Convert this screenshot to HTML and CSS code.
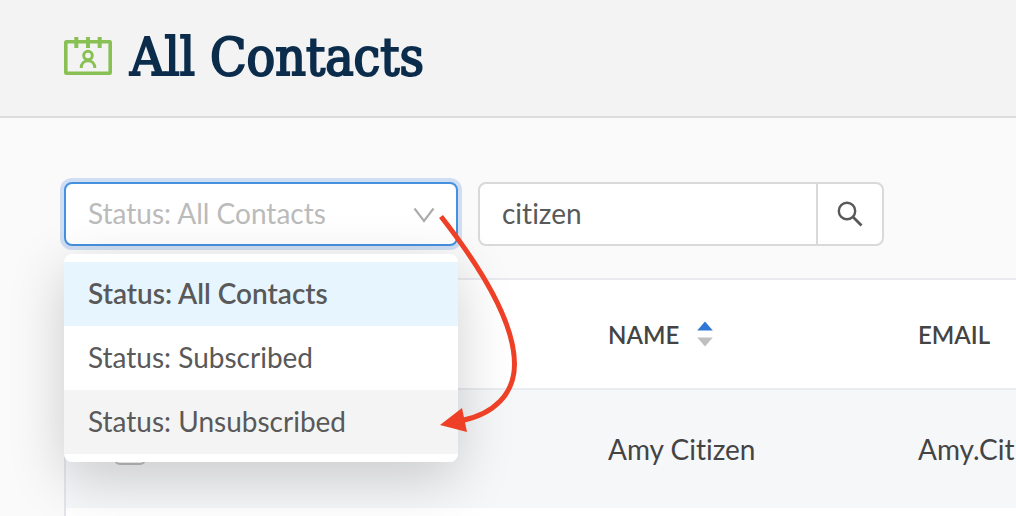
FILE: index.html
```html
<!DOCTYPE html>
<html lang="en">
<head>
    <meta charset="UTF-8">
    <meta name="viewport" content="width=device-width, initial-scale=1.0">
    <title>All Contacts</title>
    <link rel="stylesheet" href="styles.css">
</head>
<body>
    <header class="page-header">
        <svg class="page-icon" width="48" height="40" viewBox="0 0 48 40" fill="none" stroke="#89c053" aria-hidden="true">
            <rect x="1.800" y="5.800" width="44.400" height="31.400" rx="0.5" stroke-width="3.600"/>
            <path d="M12.3 1v11M24 1v11M35.7 1v11" stroke-width="4"/>
            <circle cx="24" cy="19.500" r="4.3" stroke-width="3"/>
            <path d="M17.2 32c0-4.200 2.800-7.200 6.800-7.200s6.800 3 6.800 7.200" stroke-width="3"/>
        </svg>
        <h1>All Contacts</h1>
    </header>

    <main class="content">
        <form class="filters">
            <div class="status-filter">
                <select class="status-select" id="status" aria-label="Status">
                    <option selected>Status: All Contacts</option>
                    <option>Status: Subscribed</option>
                    <option>Status: Unsubscribed</option>
                </select>
                <svg class="chevron" width="22" height="16" viewBox="0 0 22 16" fill="none" stroke="#adadad" stroke-width="2.200" aria-hidden="true">
                    <path d="M1.500 1.500L11 14L20.500 1.500"/>
                </svg>
                <ul class="menu" role="listbox" aria-label="Status options">
                    <li class="menu-item selected" role="option" aria-selected="true">Status: All Contacts</li>
                    <li class="menu-item" role="option">Status: Subscribed</li>
                    <li class="menu-item active" role="option">Status: Unsubscribed</li>
                </ul>
            </div>

            <div class="search">
                <input class="search-input" type="text" value="citizen" aria-label="Search contacts">
                <button class="search-button" type="button" aria-label="Search">
                    <svg width="28" height="28" viewBox="0 0 28 28" fill="none" stroke="#595959" stroke-width="2.400" aria-hidden="true">
                        <circle cx="11" cy="11" r="8.200"/>
                        <path d="M16.800 16.800L25.500 25.500" stroke-width="2.800"/>
                    </svg>
                </button>
            </div>
        </form>

        <table class="contacts">
            <thead>
                <tr>
                    <th class="col-select"></th>
                    <th class="col-name">
                        <span class="sortable">NAME
                            <svg width="16" height="26" viewBox="0 0 16 26" aria-hidden="true">
                                <path d="M8 0.500L15.800 9.500H0.200z" fill="#2f77d6"/>
                                <path d="M8 25.500L15.800 16.500H0.200z" fill="#bfbfbf"/>
                            </svg>
                        </span>
                    </th>
                    <th>EMAIL</th>
                </tr>
            </thead>
            <tbody>
                <tr>
                    <td><input class="row-check" type="checkbox" aria-label="Select Amy Citizen"></td>
                    <td>Amy Citizen</td>
                    <td>Amy.Citizen</td>
                </tr>
                <tr>
                    <td></td>
                    <td></td>
                    <td></td>
                </tr>
            </tbody>
        </table>
    </main>

    <svg class="arrow" width="90" height="230" viewBox="434 210 90 230" aria-hidden="true">
        <path d="M441 216.500C475 260 514.500 320 514.500 364C514.500 394 494 414 462 420.500" fill="none" stroke="#ee4026" stroke-width="5"/>
        <path d="M440 425L462 408L467 432z" fill="#ee4026"/>
    </svg>
</body>
</html>
```

FILE: styles.css
```css
* {
    box-sizing: border-box;
}

body {
    margin: 0;
    height: 100vh;
    display: flex;
    flex-direction: column;
    font-family: Lato, "Liberation Sans", sans-serif;
    font-size: 28px;
    font-variant-ligatures: none;
    color: #444;
    background: #fafafa;
    overflow: hidden;
}

.page-header {
    display: flex;
    flex-shrink: 0;
    align-items: center;
    gap: 18px;
    height: 118px;
    padding: 0 64px 2px;
    background: #f3f3f3;
    border-bottom: 2px solid #dcdcdc;
}

.page-icon {
    margin-bottom: 2px;
}

.page-header h1 {
    margin: 0;
    font-family: "Roboto Slab", "DejaVu Serif Condensed", "DejaVu Serif", serif;
    font-size: 53px;
    font-weight: 400;
    line-height: 64px;
    color: #0c2c4c;
    -webkit-text-stroke: 2px #0c2c4c;
}

.content {
    flex: 1;
    min-height: 0;
    padding: 64px 0 0 64px;
    overflow: hidden;
}

.filters {
    display: flex;
    gap: 20px;
    margin-bottom: 32px;
}

.status-filter {
    position: relative;
    width: 394px;
}

.status-select {
    display: block;
    width: 100%;
    height: 64px;
    padding: 0 22px 2px;
    appearance: none;
    font: inherit;
    font-variant-ligatures: none;
    color: #bbb;
    background: #fff;
    border: 2px solid #4690e0;
    border-radius: 8px;
    outline: none;
    box-shadow: 0 0 0 4px #d0def3;
}

.chevron {
    position: absolute;
    top: 25px;
    right: 23px;
}

.menu {
    position: absolute;
    top: 72px;
    left: 0;
    right: 0;
    margin: 0;
    padding: 8px 0;
    list-style: none;
    background: #fff;
    border-radius: 8px;
    box-shadow: 0 16px 56px rgba(0, 0, 0, 0.19);
}

.menu-item {
    padding: 0 24px 2px;
    line-height: 62px;
    color: #595959;
}

.menu-item.selected {
    background: #e7f5fe;
    font-weight: 600;
}

.menu-item.active {
    background: #f4f4f4;
}

.search {
    display: flex;
    width: 406px;
    height: 64px;
    background: #fff;
    border: 2px solid #d9d9d9;
    border-radius: 8px;
}

.search-input {
    flex: 1;
    min-width: 0;
    padding: 0 22px 2px;
    font: inherit;
    font-variant-ligatures: none;
    color: #595959;
    background: none;
    border: none;
    outline: none;
}

.search-button {
    display: flex;
    align-items: center;
    justify-content: center;
    width: 66px;
    padding: 0;
    background: none;
    border: none;
    border-left: 2px solid #d9d9d9;
}

.contacts {
    width: 100%;
    table-layout: fixed;
    border-spacing: 0;
    border-top: 2px solid #e8eaf0;
    border-left: 2px solid #e2e6ea;
    background: #fff;
    white-space: nowrap;
}

.contacts th,
.contacts td {
    padding: 0 0 0 32px;
    text-align: left;
    overflow: hidden;
}

.contacts th {
    height: 110px;
    font-size: 24px;
    font-weight: 600;
    border-bottom: 2px solid #e8ebf0;
}

.contacts td {
    height: 118px;
}

.contacts tbody tr:nth-child(odd) {
    background: #f6f7f9;
}

.contacts th:first-child,
.contacts td:first-child {
    padding-left: 48px;
}

.col-select {
    width: 510px;
}

.col-name {
    width: 310px;
}

.sortable {
    display: flex;
    align-items: center;
    gap: 18px;
}

.row-check {
    display: block;
    width: 32px;
    height: 32px;
    margin: 0;
    appearance: none;
    background: #fff;
    border: 2px solid #bfbfbf;
    border-radius: 6px;
}

/* Callout drawn over the filters and table */
.arrow {
    position: absolute;
    top: 210px;
    left: 434px;
    pointer-events: none;
}
```
